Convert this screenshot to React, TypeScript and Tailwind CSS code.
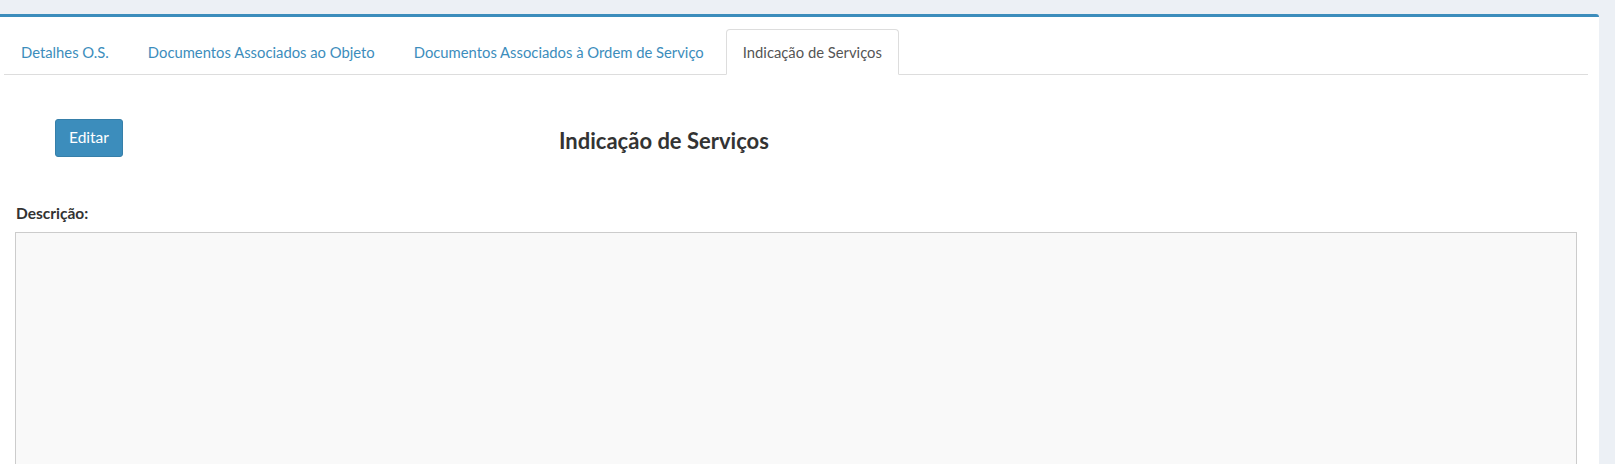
import React from "react";

const tabs = [
  "Detalhes O.S.",
  "Documentos Associados ao Objeto",
  "Documentos Associados à Ordem de Serviço",
  "Indicação de Serviços",
];

export default function App() {
  return (
    <div
      className="min-h-[464px] bg-[#ecf0f5] pt-[14px]"
      style={{ fontFamily: "Lato, 'Open Sans', sans-serif" }}
    >
      <div className="mr-[16px] h-[450px] overflow-hidden rounded-tr-[3px] border-t-[3px] border-[#3c8dbc] bg-white">
        <ul className="ml-[4px] mr-[11px] mt-[12px] flex border-b border-[#ddd]">
          {tabs.map((t, i) => {
            const active = i === tabs.length - 1;
            return (
              <li key={t} className="-mb-px mr-[5px]">
                <a
                  className={
                    "block rounded-t-[4px] border px-[16px] py-[12px] text-[14.8px] leading-[20px] " +
                    (active
                      ? "border-[#ddd] border-b-white bg-white text-[#555]"
                      : "border-transparent text-[#3c8dbc]")
                  }
                >
                  {t}
                </a>
              </li>
            );
          })}
        </ul>
        <div className="mt-[44px] flex items-center">
          <button className="ml-[55px] h-[38px] w-[68px] rounded-[3px] border border-[#367fa9] bg-[#3c8dbc] text-[15.5px] text-white">
            Editar
          </button>
          <h3 className="ml-[436px] mt-[4px] text-[22px] font-bold text-[#333]">
            Indicação de Serviços
          </h3>
        </div>
        <div className="ml-[16px] mt-[46px] text-[15.5px] font-bold leading-[20px] text-[#333]">
          Descrição:
        </div>
        <div className="ml-[15px] mt-[9px] h-[300px] w-[1562px] border border-[#ccc] bg-[#f9f9f9]"></div>
      </div>
    </div>
  );
}
